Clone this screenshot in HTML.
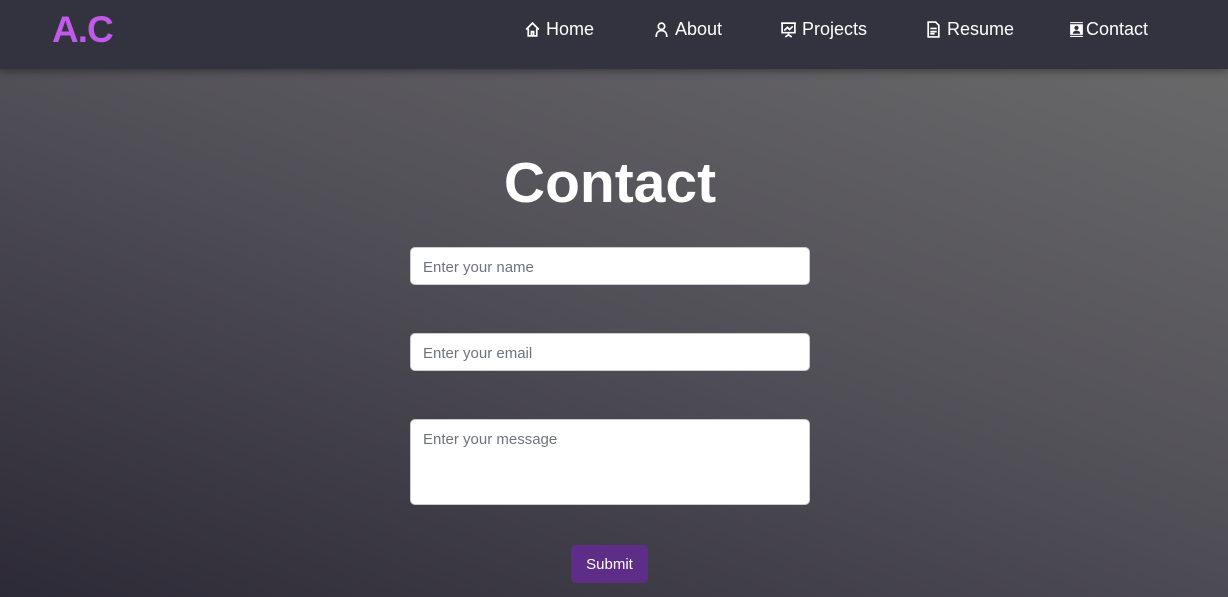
<!DOCTYPE html>
<html><head><style>
*{box-sizing:border-box;margin:0;padding:0}
body{width:1228px;height:597px;overflow:hidden;font-family:"Liberation Sans",sans-serif;background:linear-gradient(200deg,#6c6c6c 0%,#55535a 45%,#2d2a37 100%);position:relative}
nav{position:absolute;top:0;left:0;width:1228px;height:69px;background:#33323f;box-shadow:0 2px 8px rgba(0,0,0,.4)}
.logo{position:absolute;left:52px;top:9px;font-size:37px;color:#c05ae8;font-weight:bold;letter-spacing:-1px}
.nav a{position:absolute;top:19px;color:#fff;font-size:18px;text-decoration:none;display:flex;align-items:center;gap:5px}
svg{width:17px;height:17px;fill:none;stroke:#fff;stroke-width:1.6}
h1{position:absolute;top:150px;width:100%;text-align:center;color:#fff;font-size:57px;font-weight:bold;padding-right:8px}
.in{position:absolute;left:410px;width:400px;background:#fff;border:1px solid #ccc;border-radius:5px;color:#6c757d;font-size:15px;padding:0 12px}
.btn{position:absolute;left:571px;top:545px;width:77px;height:38px;background:#5e2d87;border-radius:5px;color:#fff;font-size:15px;text-align:center;line-height:39px}
</style></head><body>
<nav><div class="logo">A.C</div>
<div class="nav">
<a style="left:524px"><svg viewBox="0 0 16 16"><path d="M2 8L8 2l6 6M4 7v7h8V7M7 14v-4h2v4"/></svg>Home</a>
<a style="left:653px"><svg viewBox="0 0 16 16"><circle cx="8" cy="5" r="3"/><path d="M3 15c0-4 2-6 5-6s5 2 5 6"/></svg>About</a>
<a style="left:780px"><svg viewBox="0 0 16 16"><path d="M1 2h14M2 2v9h12V2M8 11v2M5 15l3-2 3 2M4 9l3-3 2 2 3-3"/></svg>Projects</a>
<a style="left:925px"><svg viewBox="0 0 16 16"><path d="M3 1h7l3 3v11H3zM5 7h6M5 10h6M5 12h4"/></svg>Resume</a>
<a style="left:1068px;gap:1px"><svg viewBox="0 0 16 16" style="fill:#fff;stroke:none"><path d="M2 1h12v1H2zM2 14h12v1H2zM2 3h12v10H2z"/><circle cx="8" cy="6.5" r="2" fill="#33323f"/><path d="M4.5 12c0-2 1.5-3 3.5-3s3.5 1 3.5 3z" fill="#33323f"/></svg>Contact</a>
</div></nav>
<h1>Contact</h1>
<div class="in" style="top:247px;height:38px;line-height:39px">Enter your name</div>
<div class="in" style="top:333px;height:38px;line-height:39px">Enter your email</div>
<div class="in" style="top:419px;height:86px;padding-top:11px">Enter your message</div>
<div class="btn">Submit</div>
</body></html>
